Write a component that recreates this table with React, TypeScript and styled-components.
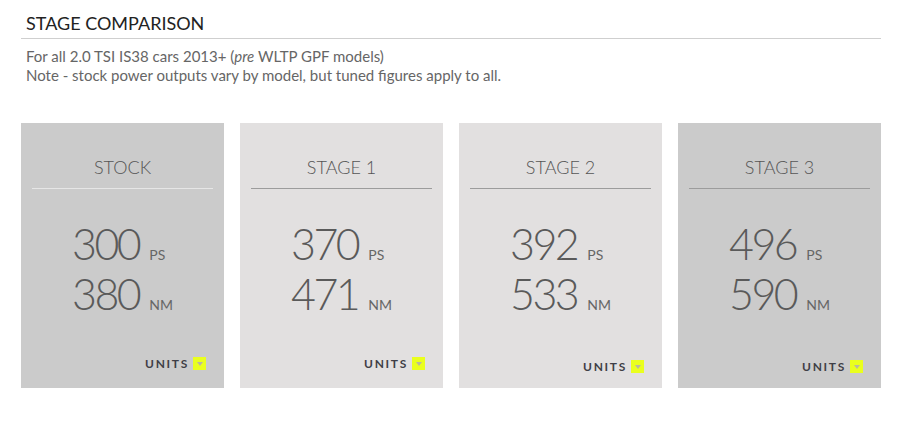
import React from "react";
import styled, { createGlobalStyle } from "styled-components";

const Global = createGlobalStyle`
  html, body { margin: 0; padding: 0; background: #fff; }
  body { font-family: Lato, "Open Sans", sans-serif; }
`;

const Page = styled.div`
  width: 901px;
  height: 434px;
  padding: 13px 20px 0 21px;
  box-sizing: border-box;
`;

const Heading = styled.h2`
  margin: 0;
  padding: 0 0 5px 5px;
  font-size: 18px;
  font-weight: 400;
  line-height: 20px;
  color: #222;
  border-bottom: 1px solid #cfcfcf;
`;

const Desc = styled.p`
  margin: 8px 0 0 5px;
  font-size: 15px;
  line-height: 19px;
  color: #666;
`;

const Cards = styled.div`
  display: grid;
  grid-template-columns: repeat(4, 203px);
  justify-content: space-between;
  margin-top: 38px;
  width: 860px;
`;

const Card = styled.div<{ $dark: boolean }>`
  background: ${(p) => (p.$dark ? "#cbcbcb" : "#e2e0e0")};
  height: 265px;
  padding: 0 11px;
  display: flex;
  flex-direction: column;
  box-sizing: border-box;
`;

const Title = styled.div<{ $light: boolean }>`
  margin-top: 33px;
  padding-bottom: 10px;
  text-align: center;
  font-size: 18px;
  font-weight: 300;
  line-height: 22px;
  color: #555;
  border-bottom: 1px solid ${(p) => (p.$light ? "#e6e6e6" : "#9c9c9c")};
`;

const Figures = styled.div`
  margin-top: 30px;
  display: grid;
  grid-template-columns: auto auto;
  column-gap: 10px;
  justify-content: center;
  align-items: baseline;
  grid-auto-rows: 50px;
`;

const Num = styled.span`
  font-size: 43px;
  font-weight: 300;
  letter-spacing: -2.5px;
  line-height: 50px;
  color: #5a5a5a;
`;

const Unit = styled.span`
  font-size: 14px;
  line-height: 50px;
  color: #666;
`;

const UnitsRow = styled.div<{ $low: boolean }>`
  margin-top: auto;
  margin-bottom: ${(p) => (p.$low ? "14px" : "17px")};
  display: flex;
  justify-content: flex-end;
  align-items: center;
  gap: 4px;
  padding-right: 7px;
`;

const UnitsLabel = styled.span`
  font-size: 12px;
  font-weight: 700;
  letter-spacing: 1.7px;
  color: #3f3f46;
`;

const Toggle = styled.span`
  width: 13px;
  height: 13px;
  background: #eaff1e;
  display: flex;
  align-items: center;
  justify-content: center;
`;

const stages = [
  { name: "STOCK", ps: 300, nm: 380, dark: true, light: true, low: false },
  { name: "STAGE 1", ps: 370, nm: 471, dark: false, light: false, low: false },
  { name: "STAGE 2", ps: 392, nm: 533, dark: false, light: false, low: true },
  { name: "STAGE 3", ps: 496, nm: 590, dark: true, light: false, low: true },
];

export default function App() {
  return (
    <>
      <Global />
      <Page>
        <Heading>STAGE COMPARISON</Heading>
        <Desc>
          For all 2.0 TSI IS38 cars 2013+ (<em>pre</em> WLTP GPF models)
          <br />
          Note - stock power outputs vary by model, but tuned figures apply to all.
        </Desc>
        <Cards>
          {stages.map((s) => (
            <Card key={s.name} $dark={s.dark}>
              <Title $light={s.light}>{s.name}</Title>
              <Figures>
                <Num>{s.ps}</Num>
                <Unit>PS</Unit>
                <Num>{s.nm}</Num>
                <Unit>NM</Unit>
              </Figures>
              <UnitsRow $low={s.low}>
                <UnitsLabel>UNITS</UnitsLabel>
                <Toggle>
                  <svg width="6" height="4" viewBox="0 0 6 4">
                    <path d="M0 0 L6 0 L3 4 Z" fill="#b9b9a0" />
                  </svg>
                </Toggle>
              </UnitsRow>
            </Card>
          ))}
        </Cards>
      </Page>
    </>
  );
}
